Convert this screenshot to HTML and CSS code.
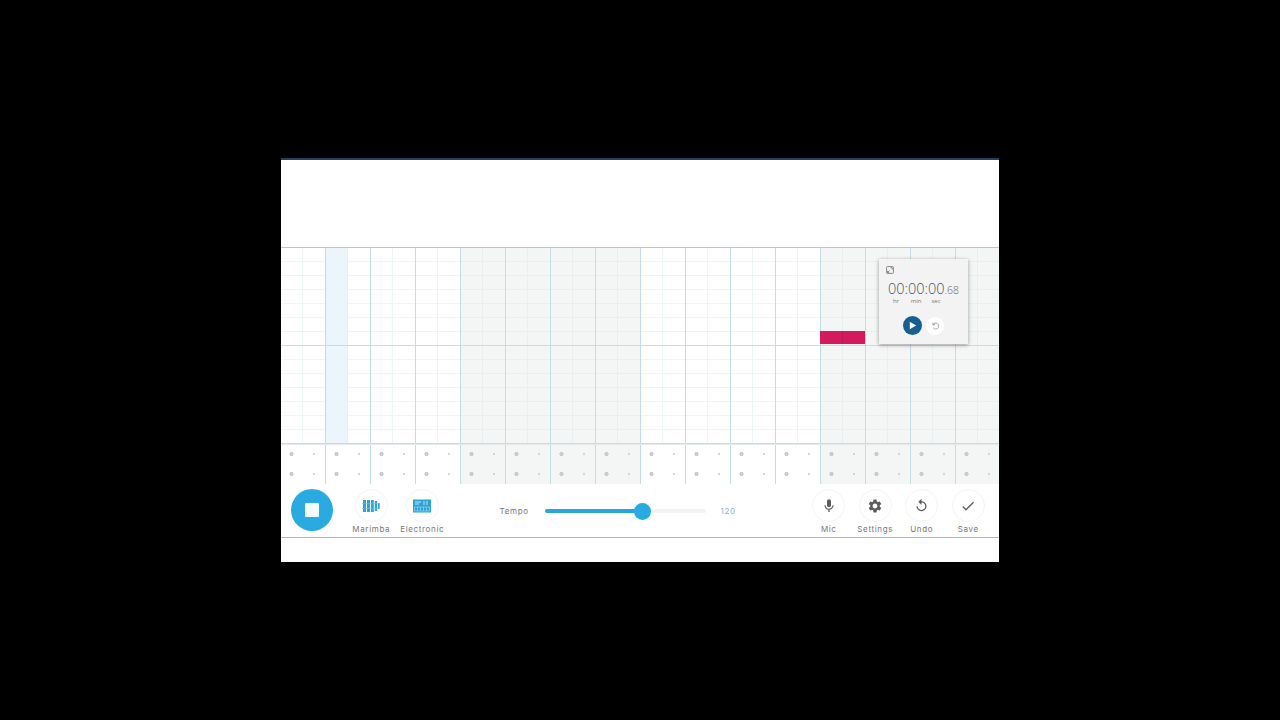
FILE: index.html
```html
<!DOCTYPE html>
<html lang="en">
<head>
<meta charset="utf-8">
<title>Song Maker</title>
<link rel="stylesheet" href="styles.css">
</head>
<body>
<main class="app">
  <div class="top"></div>
  <section class="sequencer">
    <div class="melody">
      <div class="beat"></div>
      <div class="beat current"></div>
      <div class="beat"></div>
      <div class="beat"></div>
      <div class="beat alt"></div>
      <div class="beat alt"></div>
      <div class="beat alt"></div>
      <div class="beat alt"></div>
      <div class="beat"></div>
      <div class="beat"></div>
      <div class="beat"></div>
      <div class="beat"></div>
      <div class="beat alt"><div class="note"></div></div>
      <div class="beat alt"></div>
      <div class="beat alt"></div>
      <div class="beat alt"></div>
    </div>
    <div class="percussion">
      <div class="pbeat"></div>
      <div class="pbeat current"></div>
      <div class="pbeat"></div>
      <div class="pbeat"></div>
      <div class="pbeat alt"></div>
      <div class="pbeat alt"></div>
      <div class="pbeat alt"></div>
      <div class="pbeat alt"></div>
      <div class="pbeat"></div>
      <div class="pbeat"></div>
      <div class="pbeat"></div>
      <div class="pbeat"></div>
      <div class="pbeat alt"></div>
      <div class="pbeat alt"></div>
      <div class="pbeat alt"></div>
      <div class="pbeat alt"></div>
    </div>
    <aside class="timer">
      <svg class="timer-icon" viewBox="0 0 10 10"><rect x="0.7" y="0.7" width="8.6" height="8.6" rx="1"/><path d="M2 8l2.400-2.400M2 6v2h2M5.500 2.200h2.300v2.300"/></svg>
      <div class="time">00:00:00<span class="ms">.68</span></div>
      <div class="units"><span>hr</span><span>min</span><span>sec</span></div>
      <div class="timer-actions">
        <span class="play"><svg viewBox="0 0 10 10"><path d="M2 .8L9 5 2 9.200z"/></svg></span>
        <span class="reset"><svg viewBox="0 0 24 24"><path d="M5 4v6h6M5.500 10A8 8 0 1 1 6 18"/></svg></span>
      </div>
    </aside>
  </section>
  <section class="toolbar">
    <button class="stop"><span class="stop-square"></span></button>
    <div class="tool first">
      <span class="circle"><svg class="blue instrument" viewBox="0 0 18 14"><path d="M1 1h3v12H1zM5 1h3v12H5zM9 1h2.800v12H9zM12.800 2h2.300v10h-2.300zM16 4h1.700v6H16z"/><path class="cut" d="M0 4.500h18M0 9.500h18"/></svg></span>
      <span class="label">Marimba</span>
    </div>
    <div class="tool second">
      <span class="circle"><svg class="blue instrument" viewBox="0 0 18 14"><path d="M0 .5h18v13H0z"/><path class="keys" d="M2 3h6M2 5h4M11 2v4M14 2v4"/><path class="grid" d="M1.500 8h15v4h-15zM4.500 8v4M7.500 8v4M10.500 8v4M13.500 8v4"/></svg></span>
      <span class="label">Electronic</span>
    </div>
    <div class="tempo">
      <span class="tempo-label">Tempo</span>
      <div class="slider"><div class="fill"></div><div class="thumb"></div></div>
      <span class="tempo-value">120</span>
    </div>
    <div class="actions">
      <div class="tool">
        <span class="circle"><svg class="dark" viewBox="0 0 24 24"><path d="M12 14c1.660 0 2.990-1.340 2.990-3L15 5c0-1.660-1.340-3-3-3S9 3.340 9 5v6c0 1.660 1.340 3 3 3zm5.300-3c0 3-2.540 5.100-5.300 5.100S6.700 14 6.700 11H5c0 3.410 2.720 6.230 6 6.720V21h2v-3.280c3.280-.48 6-3.300 6-6.720h-1.700z"/></svg></span>
        <span class="label">Mic</span>
      </div>
      <div class="tool">
        <span class="circle"><svg class="dark" viewBox="0 0 24 24"><path d="M19.140 12.940c.04-.3.06-.61.06-.94 0-.32-.02-.64-.07-.94l2.030-1.580c.18-.14.23-.41.12-.61l-1.920-3.320c-.12-.22-.37-.29-.59-.22l-2.390.96c-.5-.38-1.030-.7-1.620-.94l-.36-2.540c-.04-.24-.24-.41-.48-.41h-3.840c-.24 0-.43.17-.47.41l-.36 2.540c-.59.24-1.130.57-1.620.94l-2.390-.96c-.22-.08-.47 0-.59.22L2.740 8.870c-.12.21-.08.47.12.61l2.030 1.580c-.05.3-.09.63-.09.94s.02.64.07.94l-2.030 1.580c-.18.14-.23.41-.12.61l1.920 3.320c.12.22.37.29.59.22l2.390-.96c.5.38 1.030.7 1.620.94l.36 2.540c.05.24.24.41.48.41h3.840c.24 0 .44-.17.47-.41l.36-2.540c.59-.24 1.130-.56 1.620-.94l2.390.96c.22.08.47 0 .59-.22l1.920-3.320c.12-.22.07-.47-.12-.61l-2.010-1.580zM12 15.600c-1.980 0-3.600-1.620-3.600-3.600s1.620-3.600 3.600-3.600 3.600 1.620 3.600 3.600-1.620 3.600-3.600 3.600z"/></svg></span>
        <span class="label">Settings</span>
      </div>
      <div class="tool">
        <span class="circle"><svg class="dark small" viewBox="0 0 24 24"><path d="M12 5V1L7 6l5 5V7c3.310 0 6 2.690 6 6s-2.690 6-6 6-6-2.690-6-6H4c0 4.420 3.580 8 8 8s8-3.580 8-8-3.580-8-8-8z"/></svg></span>
        <span class="label">Undo</span>
      </div>
      <div class="tool">
        <span class="circle"><svg class="dark" viewBox="0 0 24 24"><path d="M9 16.170L4.830 12l-1.420 1.410L9 19 21 7l-1.410-1.410z"/></svg></span>
        <span class="label">Save</span>
      </div>
    </div>
  </section>
  <div class="bottom"></div>
</main>
</body>
</html>
```
FILE: styles.css
```css
* { box-sizing: border-box; }
html, body { margin: 0; height: 100%; background: #000; }
body { padding: 158px 0 0 281px; overflow: hidden; font-family: "Inter", "Liberation Sans", sans-serif; }

.app {
  width: 718px;
  height: 404px;
  background: #fff;
  border-top: 2px solid #22405a;
  display: flex;
  flex-direction: column;
  overflow: hidden;
}
.top { height: 87px; flex: none; }

.sequencer {
  position: relative;
  height: 237px;
  flex: none;
  border-top: 1px solid #b7c9cc;
  overflow: hidden;
}
.melody, .percussion { display: flex; margin-left: -1px; }
.melody { height: 196px; }
.percussion { position: relative; z-index: 0; height: 40px; border-top: 1px solid #e4eaeb; }

.beat, .pbeat {
  width: 45px;
  flex: none;
  position: relative;
  border-left: 1px solid #bfdde3;
}
.beat {
  background-color: #fff;
  background-image:
    repeating-linear-gradient(to bottom, transparent 0 97px, #bfe0e6 97px 98px),
    linear-gradient(to right, transparent 21px, #edf5f7 21px 22px, transparent 22px),
    repeating-linear-gradient(to bottom, transparent 0 13px, #edf5f7 13px 14px);
}
.beat.alt {
  background-color: #f4f5f5;
  background-image:
    repeating-linear-gradient(to bottom, transparent 0 97px, #bfe0e6 97px 98px),
    linear-gradient(to right, transparent 21px, #e9eff1 21px 22px, transparent 22px),
    repeating-linear-gradient(to bottom, transparent 0 13px, #e9eff1 13px 14px);
}
.beat.current {
  background-image:
    repeating-linear-gradient(to bottom, transparent 0 97px, #bfe0e6 97px 98px),
    linear-gradient(to right, #eaf6fc 21px, #e2eff4 21px 22px, transparent 22px),
    repeating-linear-gradient(to bottom, transparent 0 13px, #edf5f7 13px 14px);
}
.pbeat {
  background-color: #fff;
  background-image:
    radial-gradient(circle at 10.5px 9px, #cbcbcf 0 1.8px, transparent 2.4px),
    radial-gradient(circle at 10.5px 29px, #cbcbcf 0 1.8px, transparent 2.4px),
    radial-gradient(circle at 33px 9px, #d6d6d9 0 .9px, transparent 1.5px),
    radial-gradient(circle at 33px 29px, #d6d6d9 0 .9px, transparent 1.5px);
}
.pbeat.alt { background-color: #f4f5f5; }
.pbeat.current::before {
  content: "";
  position: absolute;
  inset: 0 23px 0 0;
  background: #eaf6fc;
  z-index: -1;
}

.note {
  position: absolute;
  left: -1px;
  top: 83px;
  width: 45px;
  height: 13px;
  background: #d21a5c;
  background-image: linear-gradient(to right, transparent 22px, #bb1c56 22px 23px, transparent 23px);
}

.timer {
  position: absolute;
  left: 598px;
  top: 11px;
  width: 89px;
  height: 85px;
  background: #f3f3f3;
  box-shadow: 0 1px 4px rgba(0, 0, 0, .38);
  padding: 7px 7px 0 9px;
  font-family: "Open Sans", "Liberation Sans", sans-serif;
}
.timer-icon {
  display: block;
  width: 8px;
  height: 8px;
  margin-left: -2px;
  fill: none;
  stroke: #666;
  stroke-width: .9;
}
.time {
  margin-top: 6px;
  font-size: 14.5px;
  line-height: 17px;
  font-weight: 300;
  white-space: nowrap;
  color: #505050;
}
.ms { font-size: 10.5px; color: #666; }
.units {
  display: flex;
  margin: -2px 0 0 -2px;
  font-size: 6px;
  line-height: 8px;
  color: #777;
}
.units span { width: 20px; text-align: center; }
.timer-actions {
  display: flex;
  align-items: center;
  margin: 11px 0 0 15px;
  gap: 4px;
}
.play {
  width: 19px;
  height: 19px;
  border-radius: 50%;
  background: #155f92;
  display: flex;
  align-items: center;
  justify-content: center;
}
.play svg { width: 9px; height: 9px; fill: #fff; }
.reset {
  width: 18px;
  height: 18px;
  border-radius: 50%;
  background: #fff;
  display: flex;
  align-items: center;
  justify-content: center;
}
.reset svg { width: 9px; height: 9px; fill: none; stroke: #888; stroke-width: 2; }

.toolbar {
  height: 54px;
  flex: none;
  display: flex;
  align-items: flex-start;
  padding: 5px 7.5px 0 10px;
  border-bottom: 1px solid #b4b4b4;
}
.stop {
  width: 42px;
  height: 42px;
  flex: none;
  border: 0;
  padding: 0;
  border-radius: 50%;
  background: #29abe2;
  display: flex;
  align-items: center;
  justify-content: center;
}
.stop-square { width: 14px; height: 14px; background: #f4fbfe; border-radius: 1px; margin-left: -1px; }

.tool {
  width: 46.5px;
  flex: none;
  display: flex;
  flex-direction: column;
  align-items: center;
}
.tool.first { margin-left: 15px; }
.tool.second { margin-left: 4.5px; }
.circle {
  width: 33px;
  height: 33px;
  border-radius: 50%;
  border: 1px solid #f4f4f4;
  display: flex;
  align-items: center;
  justify-content: center;
}
.circle svg { width: 16px; height: 16px; }
.circle svg.small { width: 15px; height: 15px; }
.circle svg.instrument { width: 18px; height: 14px; }
.blue { fill: #29a3d8; }
.blue .cut { fill: none; stroke: #6fc3e6; stroke-width: .6; }
.blue .keys { fill: none; stroke: #bfe6f5; stroke-width: 1; }
.blue .grid { fill: none; stroke: #a8dcf0; stroke-width: .6; }
.dark { fill: #5c5c5c; }
.label {
  margin-top: 1px;
  font-size: 8px;
  line-height: 12px;
  letter-spacing: .65px;
  color: #777;
  white-space: nowrap;
}

.tempo {
  display: flex;
  align-items: center;
  height: 42px;
  margin-left: 54px;
  font-size: 8px;
  letter-spacing: .65px;
  color: #777;
  padding-top: 2px;
}
.tempo-label { width: 45px; }
.slider {
  position: relative;
  width: 161px;
  height: 4px;
  border-radius: 2px;
  background: #f3f3f3;
}
.fill { width: 97px; height: 4px; border-radius: 2px; background: #2aa5dc; }
.thumb {
  position: absolute;
  left: 89.5px;
  top: -6.5px;
  width: 17px;
  height: 17px;
  border-radius: 50%;
  background: #29abe2;
}
.tempo-value { margin-left: 15px; color: #7fb4cf; }

.actions { display: flex; margin-left: auto; }

.bottom { flex: 1; }
```
